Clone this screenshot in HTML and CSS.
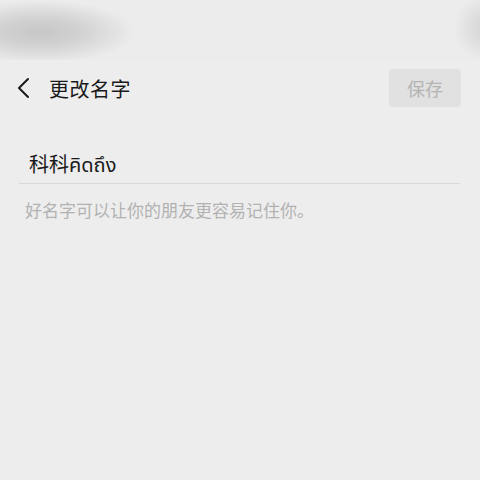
FILE: index.html
```html
<!DOCTYPE html>
<html lang="zh-CN">
<head>
  <meta charset="UTF-8">
  <meta name="viewport" content="width=device-width, initial-scale=1.0">
  <title>更改名字</title>
  <link rel="stylesheet" href="styles.css">
</head>
<body>
  <div class="status-bar"></div>

  <header class="topbar">
    <div class="topbar-left">
      <button class="back-btn" aria-label="返回">
        <svg width="16" height="22" viewBox="0 0 16 22">
          <path d="M12 2 L3 11 L12 20" fill="none" stroke="#1a1a1a" stroke-width="2" stroke-linecap="round" stroke-linejoin="round"/>
        </svg>
      </button>
      <h1>更改名字</h1>
    </div>
    <button class="save-btn">保存</button>
  </header>

  <section class="name-form">
    <div class="name-field">科科คิดถึง</div>
    <p class="hint">好名字可以让你的朋友更容易记住你。</p>
  </section>
</body>
</html>
```

FILE: styles.css
```css
/* General */
body {
  margin: 0;
  background-color: #ededed;
  font-family: "Noto Sans CJK SC", "Noto Sans", sans-serif;
  color: #1a1a1a;
  min-height: 100vh;
}

/* blurred status bar */
.status-bar {
  height: 60px;
  background:
    radial-gradient(ellipse 95px 32px at 40px 32px, #c6c6c6 0%, rgba(200,200,200,0.7) 45%, rgba(237,237,237,0) 100%),
    radial-gradient(ellipse 30px 34px at 484px 28px, #d4d4d4 0%, rgba(237,237,237,0) 100%),
    #ececec;
}

/* Top bar */
.topbar {
  display: flex;
  justify-content: space-between;
  align-items: center;
  padding: 9px 19px 0 16px;
  height: 38px;
}

.topbar-left {
  display: flex;
  align-items: center;
}

.back-btn {
  background: transparent;
  border: none;
  padding: 0;
  width: 16px;
  height: 22px;
  margin-right: 17px;
  display: flex;
}

.topbar h1 {
  margin: 0;
  font-size: 20px;
  font-weight: 400;
  letter-spacing: 0.5px;
  color: #1a1a1a;
}

.save-btn {
  width: 72px;
  height: 38px;
  border: none;
  border-radius: 4px;
  background-color: #e1e1e1;
  color: #b4b4b4;
  font-family: inherit;
  font-size: 18px;
}

/* Form */
.name-form {
  padding: 42px 20px 0 19px;
}

.name-field {
  font-family: "Noto Sans CJK SC", "Noto Sans Thai", "Noto Sans", sans-serif;
  font-size: 20px;
  padding: 0 0 4px 10px;
  line-height: 30px;
  border-bottom: 1px solid #d9d9d9;
}

.hint {
  margin: 13px 0 0 6px;
  font-size: 17px;
  color: #b2b2b2;
}
```
